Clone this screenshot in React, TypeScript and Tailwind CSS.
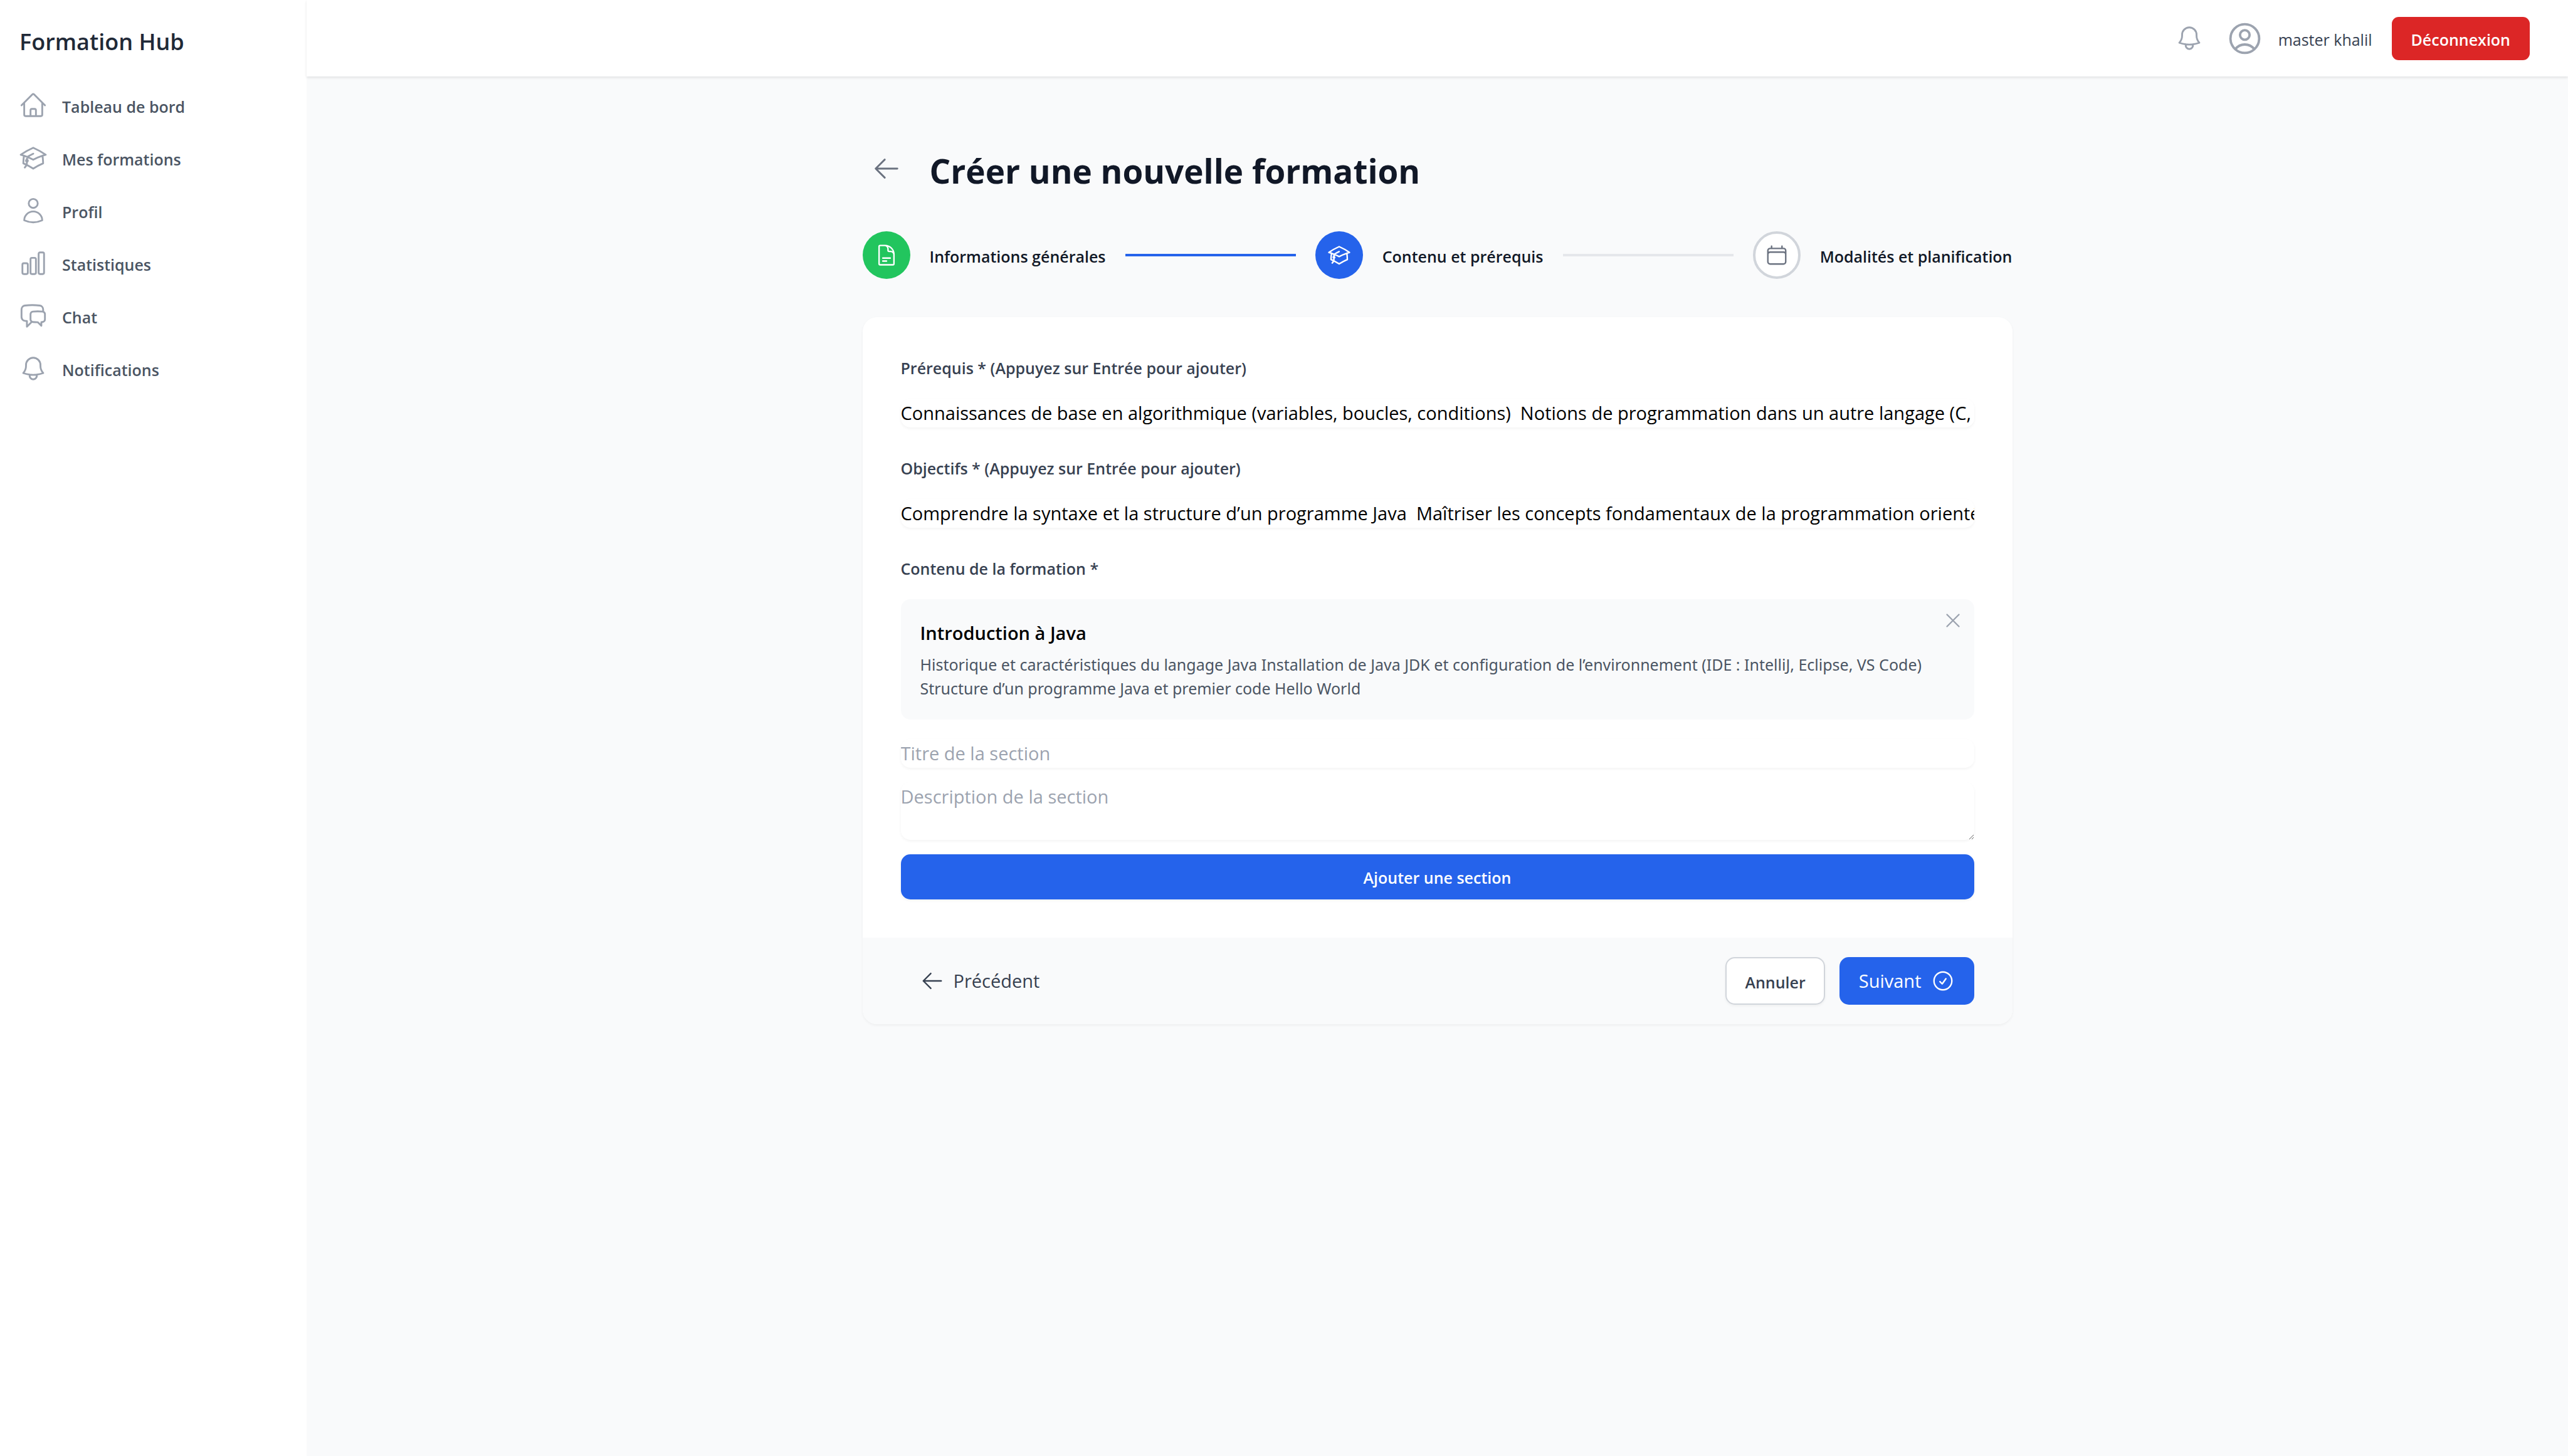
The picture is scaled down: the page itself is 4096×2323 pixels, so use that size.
import { useState } from "react";
import type { ComponentType } from "react";
import {
  HiOutlineAcademicCap,
  HiOutlineArrowLeft,
  HiOutlineBell,
  HiOutlineCalendar,
  HiOutlineChartBar,
  HiOutlineChatBubbleLeftRight,
  HiOutlineCheckCircle,
  HiOutlineDocumentText,
  HiOutlineHome,
  HiOutlineUser,
  HiOutlineUserCircle,
  HiOutlineXMark,
} from "react-icons/hi2";

type Icon = ComponentType<{ className?: string }>;

const navItems: { label: string; icon: Icon }[] = [
  { label: "Tableau de bord", icon: HiOutlineHome },
  { label: "Mes formations", icon: HiOutlineAcademicCap },
  { label: "Profil", icon: HiOutlineUser },
  { label: "Statistiques", icon: HiOutlineChartBar },
  { label: "Chat", icon: HiOutlineChatBubbleLeftRight },
  { label: "Notifications", icon: HiOutlineBell },
];

const steps: { label: string; icon: Icon; circle: string; line: string }[] = [
  {
    label: "Informations générales",
    icon: HiOutlineDocumentText,
    circle: "bg-[#22c55e] text-white",
    line: "bg-[#2563eb]",
  },
  {
    label: "Contenu et prérequis",
    icon: HiOutlineAcademicCap,
    circle: "bg-[#2563eb] text-white",
    line: "bg-[#e5e7eb]",
  },
  {
    label: "Modalités et planification",
    icon: HiOutlineCalendar,
    circle: "border-4 border-[#d1d5db] bg-white text-[#6b7280]",
    line: "",
  },
];

const fieldShadow = "rounded-[15px] shadow-[0_2px_4px_rgba(0,0,0,0.05)]";

function Sidebar() {
  return (
    <aside className="w-[489px] shrink-0 bg-white pt-10">
      <h1 className="px-[31px] text-[36px] leading-[54px] font-semibold text-[#1f2937]">Formation Hub</h1>
      <nav className="mt-9 flex flex-col gap-2 px-[15px]">
        {navItems.map(({ label, icon: ItemIcon }) => (
          <a
            key={label}
            href="#"
            className="flex items-center gap-[23px] rounded-[11px] px-[15px] py-[15px] text-[25px] leading-[38px] font-semibold text-[#4b5563]"
          >
            <ItemIcon className="size-[46px] shrink-0 text-[#9ca3af]" />
            <span className="pt-1">{label}</span>
          </a>
        ))}
      </nav>
    </aside>
  );
}

function Header() {
  return (
    <header className="relative flex h-[122px] items-center justify-end gap-[31px] bg-white pr-[61px] shadow-[0_2px_4px_rgba(0,0,0,0.1)]">
      <button type="button" aria-label="Notifications" className="p-1 text-[#9ca3af]">
        <HiOutlineBell className="size-[46px]" />
      </button>
      <div className="flex items-center gap-[23px] text-[25px] leading-[38px] text-[#374151]">
        <HiOutlineUserCircle className="size-[61px] text-[#9ca3af]" />
        <span className="pt-1">master khalil</span>
      </div>
      <button
        type="button"
        className="rounded-[11px] bg-[#dc2626] px-[31px] pt-[17px] pb-[13px] text-[25px] leading-[39px] font-semibold text-white"
      >
        Déconnexion
      </button>
    </header>
  );
}

function Stepper() {
  return (
    <ol className="mt-[54px] flex items-center gap-[31px]">
      {steps.map(({ label, icon: StepIcon, circle, line }) => (
        <li key={label} className={line ? "flex flex-auto items-center gap-[31px]" : "flex items-center gap-[31px]"}>
          <span className={`flex size-[76px] shrink-0 items-center justify-center rounded-full ${circle}`}>
            <StepIcon className="size-[38px]" />
          </span>
          <span className="pt-1 text-[25px] leading-[38px] font-semibold whitespace-nowrap text-[#111827]">
            {label}
          </span>
          {line && <span className={`h-1 flex-1 ${line}`} />}
        </li>
      ))}
    </ol>
  );
}

function TextField({ id, label, initial }: { id: string; label: string; initial: string }) {
  const [value, setValue] = useState(initial);
  return (
    <div>
      <label htmlFor={id} className="block text-[25px] leading-[40px] font-semibold text-[#374151]">
        {label}
      </label>
      <input
        id={id}
        type="text"
        value={value}
        onChange={(e) => setValue(e.target.value)}
        className={`mt-[29px] block h-[46px] w-full text-[29px] leading-[46px] text-black outline-none ${fieldShadow}`}
      />
    </div>
  );
}

export default function App() {
  return (
    <div className="flex min-h-screen bg-[#f9fafb] font-['Open_Sans','Noto_Sans',sans-serif]">
      <Sidebar />
      <div className="min-w-0 flex-1">
        <Header />
        <main className="mx-auto max-w-[1834px] pt-[109px]">
          <div className="flex items-start gap-[31px]">
            <button type="button" aria-label="Retour" className="p-[15px] text-[#6b7280]">
              <HiOutlineArrowLeft className="size-[46px]" />
            </button>
            <h2 className="text-[53px] leading-[84px] font-bold text-[#111827]">Créer une nouvelle formation</h2>
          </div>
          <Stepper />

          <form
            onSubmit={(e) => e.preventDefault()}
            className="mt-[61px] overflow-hidden rounded-[23px] bg-white shadow-[0_2px_4px_rgba(0,0,0,0.05)]"
          >
            <div className="p-[61px]">
              <div className="flex flex-col gap-[45px]">
                <TextField
                  id="prerequis"
                  label="Prérequis * (Appuyez sur Entrée pour ajouter)"
                  initial={
                    "Connaissances de base en algorithmique (variables, boucles, conditions)  Notions de programmation dans un autre langage (C,"
                  }
                />
                <TextField
                  id="objectifs"
                  label="Objectifs * (Appuyez sur Entrée pour ajouter)"
                  initial={
                    "Comprendre la syntaxe et la structure d’un programme Java  Maîtriser les concepts fondamentaux de la programmation orientée objet"
                  }
                />
                <section>
                  <h3 className="text-[25px] leading-[40px] font-semibold text-[#374151]">Contenu de la formation *</h3>
                  <div className="relative mt-[29px] rounded-[15px] bg-[#f9fafb] px-[31px] py-[31px]">
                    <button
                      type="button"
                      aria-label="Supprimer la section"
                      className="absolute top-[15px] right-[15px] text-[#9ca3af]"
                    >
                      <HiOutlineXMark className="size-[38px]" />
                    </button>
                    <h4 className="text-[29px] leading-[46px] font-semibold text-black">Introduction à Java</h4>
                    <p className="mt-2 font-['Noto_Sans',sans-serif] text-[25px] leading-[38px] text-[#4b5563]">
                      Historique et caractéristiques du langage Java Installation de Java JDK et configuration de
                      l’environnement (IDE : IntelliJ, Eclipse, VS Code) Structure d’un programme Java et premier code
                      Hello World
                    </p>
                  </div>
                  <div className="mt-[31px] flex flex-col gap-[23px]">
                    <input
                      type="text"
                      aria-label="Titre de la section"
                      placeholder="Titre de la section"
                      className={`h-[46px] w-full text-[29px] leading-[46px] outline-none placeholder:text-[#9ca3af] ${fieldShadow}`}
                    />
                    <textarea
                      rows={2}
                      aria-label="Description de la section"
                      placeholder="Description de la section"
                      className={`block w-full resize-y text-[29px] leading-[46px] outline-none placeholder:text-[#9ca3af] ${fieldShadow}`}
                    />
                    <button
                      type="button"
                      className="w-full rounded-[15px] bg-[#2563eb] pt-[18px] pb-4 text-[25px] leading-[38px] font-semibold text-white shadow-[0_2px_4px_rgba(0,0,0,0.05)]"
                    >
                      Ajouter une section
                    </button>
                  </div>
                </section>
              </div>
            </div>
            <div className="flex items-stretch justify-between bg-[#f9fafb] px-[61px] py-[31px]">
              <button
                type="button"
                className="flex items-center gap-[15px] px-[31px] py-[15px] text-[29px] leading-[46px] text-[#374151]"
              >
                <HiOutlineArrowLeft className="size-[38px]" />
                Précédent
              </button>
              <div className="flex gap-[23px]">
                <button
                  type="button"
                  className="rounded-[15px] border-2 border-[#d1d5db] bg-white px-[29px] pt-1 text-[25px] leading-[38px] font-semibold text-[#374151] shadow-[0_2px_4px_rgba(0,0,0,0.05)]"
                >
                  Annuler
                </button>
                <button
                  type="submit"
                  className="flex items-center gap-[15px] rounded-[15px] bg-[#2563eb] px-[31px] py-[15px] text-[29px] leading-[46px] text-white"
                >
                  Suivant
                  <HiOutlineCheckCircle className="size-[38px]" />
                </button>
              </div>
            </div>
          </form>
        </main>
      </div>
    </div>
  );
}
